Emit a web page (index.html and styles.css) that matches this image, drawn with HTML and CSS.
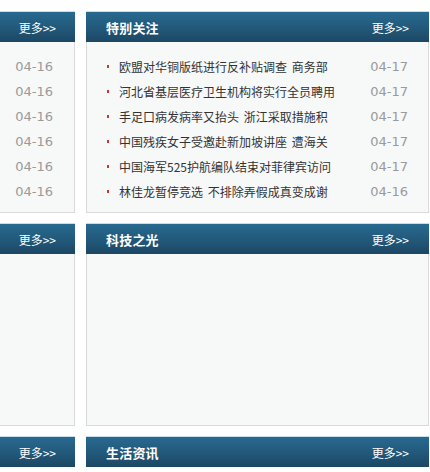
FILE: index.html
```html
<!DOCTYPE html>
<html lang="zh-CN">
<head>
<meta charset="utf-8">
<title>新闻栏目</title>
<link rel="stylesheet" href="styles.css">
</head>
<body>
<div class="page">
  <div class="band">
    <div class="box side">
      <div class="head"><span class="more">更多&gt;&gt;</span></div>
      <div class="body">
        <ul class="list">
          <li><span class="date">04-16</span></li>
          <li><span class="date">04-16</span></li>
          <li><span class="date">04-16</span></li>
          <li><span class="date">04-16</span></li>
          <li><span class="date">04-16</span></li>
          <li><span class="date">04-16</span></li>
        </ul>
      </div>
    </div>
    <div class="box main">
      <div class="head"><span class="title">特别关注</span><span class="more">更多&gt;&gt;</span></div>
      <div class="body">
        <ul class="list">
          <li><span class="txt">欧盟对华铜版纸进行反补贴调查 商务部</span><span class="date">04-17</span></li>
          <li><span class="txt">河北省基层医疗卫生机构将实行全员聘用</span><span class="date">04-17</span></li>
          <li><span class="txt">手足口病发病率又抬头 浙江采取措施积</span><span class="date">04-17</span></li>
          <li><span class="txt">中国残疾女子受邀赴新加坡讲座 遭海关</span><span class="date">04-17</span></li>
          <li><span class="txt">中国海军525护航编队结束对菲律宾访问</span><span class="date">04-17</span></li>
          <li><span class="txt">林佳龙暂停竞选 不排除弄假成真变成谢</span><span class="date">04-16</span></li>
        </ul>
      </div>
    </div>
  </div>

  <div class="band">
    <div class="box side">
      <div class="head"><span class="more">更多&gt;&gt;</span></div>
      <div class="body empty"></div>
    </div>
    <div class="box main">
      <div class="head"><span class="title">科技之光</span><span class="more">更多&gt;&gt;</span></div>
      <div class="body empty"></div>
    </div>
  </div>

  <div class="band">
    <div class="box side">
      <div class="head"><span class="more">更多&gt;&gt;</span></div>
    </div>
    <div class="box main">
      <div class="head"><span class="title">生活资讯</span><span class="more">更多&gt;&gt;</span></div>
    </div>
  </div>
</div>
</body>
</html>
```

FILE: styles.css
```css
html, body {
  margin: 0;
  padding: 0;
  background: #ffffff;
}
body {
  font-family: "Noto Sans CJK SC", "Noto Sans", sans-serif;
  font-size: 12px;
  color: #333333;
  width: 430px;
  height: 472px;
  overflow: hidden;
}
.page {
  padding-top: 11px;
  padding-right: 1px;
  display: flex;
  flex-direction: column;
  gap: 10px;
}
.band {
  display: flex;
  gap: 11px;
}
.box {
  display: flex;
  flex-direction: column;
}
.side {
  width: 75px;
  flex: none;
}
.main {
  flex: 1;
}
.head {
  height: 30px;
  border-top: 1px solid #c9dce8;
  background: linear-gradient(to bottom, #276a8f 0%, #22587a 55%, #1c4763 100%);
  display: flex;
  align-items: center;
  justify-content: space-between;
  padding: 0 20px 0 20px;
  color: #ffffff;
  white-space: nowrap;
}
.side .head {
  justify-content: flex-end;
  padding: 0 19px 0 0;
}
.title {
  font-size: 13px;
  font-weight: bold;
  letter-spacing: 0.2px;
}
.more {
  font-size: 12px;
  color: #ffffff;
}
.body {
  background: #f7f8f8;
  border: 1px solid #dadada;
  border-top: none;
  padding: 12px 0 8px 0;
}
.side .body {
  border-left: none;
}
.body.empty {
  height: 151px;
}
.list {
  list-style: none;
  margin: 0;
  padding: 0;
}
.list li {
  height: 25px;
  display: flex;
  align-items: center;
  justify-content: space-between;
  padding: 0 20px 0 20px;
  white-space: nowrap;
}
.side .list li {
  justify-content: flex-end;
  padding: 0 21px 0 0;
}
.txt {
  position: relative;
  padding-left: 12px;
  color: #333333;
  font-size: 12px;
  word-spacing: 2px;
}
.txt::before {
  content: "";
  position: absolute;
  left: 0;
  top: 50%;
  width: 2px;
  height: 3px;
  margin-top: -2px;
  background: #c8343a;
}
.date {
  font-family: "DejaVu Sans", Verdana, sans-serif;
  font-size: 13px;
  color: #9a9a9a;
}
```
